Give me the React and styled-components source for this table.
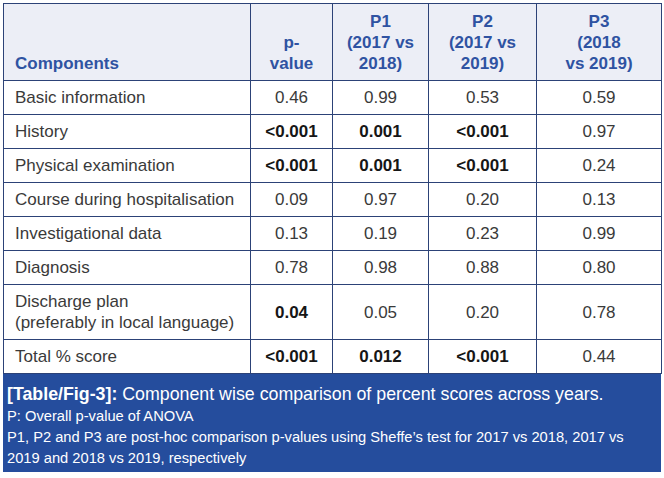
import React from "react";
import styled, { createGlobalStyle } from "styled-components";

const GlobalStyle = createGlobalStyle`
  body {
    margin: 0;
    background: #ffffff;
    font-family: "Liberation Sans", Arial, sans-serif;
  }
`;

const Figure = styled.div`
  width: 658px;
  margin: 3px;
`;

const Table = styled.table`
  width: 658px;
  border-collapse: collapse;
  table-layout: fixed;
  font-size: 17px;
  line-height: 21px;
`;

const HeadCell = styled.th`
  background: #eceef6;
  color: #2f53a2;
  font-weight: bold;
  text-align: ${(p) => (p.$left ? "left" : "center")};
  vertical-align: bottom;
  padding: 7px ${(p) => (p.$left ? "11px" : "4px")} 6px;
  border: 1px solid #2c4277;
`;

const Cell = styled.td`
  color: ${(p) => (p.$bold ? "#161616" : "#3a3a3a")};
  font-weight: ${(p) => (p.$bold ? "bold" : "normal")};
  text-align: ${(p) => (p.$left ? "left" : "center")};
  vertical-align: middle;
  padding: 6px ${(p) => (p.$left ? "11px" : "4px")};
  border: 1px solid #2c4277;
`;

const Caption = styled.div`
  background: #254d9d;
  color: #ffffff;
  padding: 8px 16px 3px 4px;
  font-size: 14.7px;
  line-height: 21px;
`;

const Title = styled.div`
  font-size: 17.8px;
  line-height: 24px;
`;

const Label = styled.b`
  font-weight: bold;
`;

const rows = [
  ["Basic information", "0.46", "0.99", "0.53", "0.59", []],
  ["History", "<0.001", "0.001", "<0.001", "0.97", [1, 2, 3]],
  ["Physical examination", "<0.001", "0.001", "<0.001", "0.24", [1, 2, 3]],
  ["Course during hospitalisation", "0.09", "0.97", "0.20", "0.13", []],
  ["Investigational data", "0.13", "0.19", "0.23", "0.99", []],
  ["Diagnosis", "0.78", "0.98", "0.88", "0.80", []],
  [
    <>
      Discharge plan
      <br />
      (preferably in local language)
    </>,
    "0.04",
    "0.05",
    "0.20",
    "0.78",
    [1],
  ],
  ["Total % score", "<0.001", "0.012", "<0.001", "0.44", [1, 2, 3]],
];

export default function App() {
  return (
    <>
      <GlobalStyle />
      <Figure>
        <Table>
          <colgroup>
            <col style={{ width: 247 }} />
            <col style={{ width: 82 }} />
            <col style={{ width: 96 }} />
            <col style={{ width: 108 }} />
            <col style={{ width: 125 }} />
          </colgroup>
          <thead>
            <tr>
              <HeadCell $left>Components</HeadCell>
              <HeadCell>
                p-
                <br />
                value
              </HeadCell>
              <HeadCell>
                P1
                <br />
                (2017 vs
                <br />
                2018)
              </HeadCell>
              <HeadCell>
                P2
                <br />
                (2017 vs
                <br />
                2019)
              </HeadCell>
              <HeadCell>
                P3
                <br />
                (2018
                <br />
                vs 2019)
              </HeadCell>
            </tr>
          </thead>
          <tbody>
            {rows.map(([name, ...rest], i) => {
              const bold = rest[4];
              return (
                <tr key={i}>
                  <Cell $left>{name}</Cell>
                  {rest.slice(0, 4).map((v, j) => (
                    <Cell key={j} $bold={bold.includes(j + 1)}>
                      {v}
                    </Cell>
                  ))}
                </tr>
              );
            })}
          </tbody>
        </Table>
        <Caption>
          <Title>
            <Label>[Table/Fig-3]:</Label> Component wise comparison of percent
            scores across years.
          </Title>
          <div>P: Overall p-value of ANOVA</div>
          <div>
            P1, P2 and P3 are post-hoc comparison p-values using Sheffe’s test
            for 2017 vs 2018, 2017 vs 2019 and 2018 vs 2019, respectively
          </div>
        </Caption>
      </Figure>
    </>
  );
}
